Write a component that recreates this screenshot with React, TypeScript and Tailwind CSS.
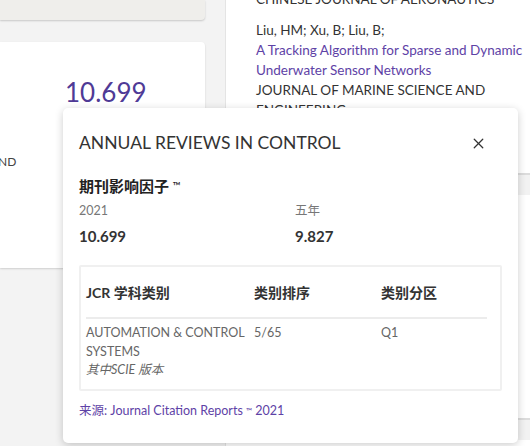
import { X } from "lucide-react";

const font = { fontFamily: '"Lato", "Noto Sans CJK SC", sans-serif' };

export default function App() {
    return (
        <div className="relative w-[530px] h-[446px] overflow-hidden bg-[#f3f3f3] text-[#333]" style={font}>
            <div className="flex h-full">
                {/* left column */}
                <div className="w-[205px] shrink-0 flex flex-col">
                    <div className="h-[20px] bg-[#efeeeb] rounded-br-[4px] shadow-[0_1px_2px_rgba(0,0,0,0.18)]"></div>
                    <div className="mt-[22px] h-[226px] bg-white rounded-tr-[4px] shadow-[0_1px_2px_rgba(0,0,0,0.15)] relative">
                        <div className="pl-[65px] pt-[34px] text-[26px] leading-[32px] text-[#4f3a96]">10.699</div>
                        <div className="mt-[46px] -ml-[2px] text-[12px] leading-[16px] text-[#444]">ND</div>
                    </div>
                </div>

                {/* right column */}
                <div className="ml-[20px] flex-1 bg-white border-l border-[#e4e4e4] flex flex-col">
                    <div className="pl-[30px] pt-0 text-[13.5px] leading-[20px] -mt-[11px]">
                        <div>CHINESE JOURNAL OF AERONAUTICS</div>
                        <div className="mt-[11px]">Liu, HM; Xu, B; Liu, B;</div>
                        <div className="text-[#5e42a6]">A Tracking Algorithm for Sparse and Dynamic</div>
                        <div className="text-[#5e42a6]">Underwater Sensor Networks</div>
                        <div>JOURNAL OF MARINE SCIENCE AND</div>
                        <div>ENGINEERING</div>
                    </div>
                    <div className="mt-[53px] h-[22px] border-t-2 border-[#dcdcdc] bg-[#f2f2f2]"></div>
                    <div className="mt-[223px] h-[22px] border-t-2 border-[#dcdcdc] bg-[#f2f2f2]"></div>
                </div>
            </div>

            {/* popup */}
            <div className="absolute left-[63px] top-[108px] w-[455px] h-[335px] bg-white rounded-[5px] shadow-[0_2px_8px_rgba(0,0,0,0.2)] px-[16px] pt-[22px]">
                <div className="flex items-center justify-between">
                    <h2 className="text-[17.5px] leading-[26px] text-[#333]">ANNUAL REVIEWS IN CONTROL</h2>
                    <button className="mr-[15px] text-[#333]">
                        <X size={17} strokeWidth={1.8} />
                    </button>
                </div>

                <div className="mt-[20px] text-[15px] leading-[20px] font-bold text-[#222]">
                    期刊影响因子 <span className="text-[11px] align-top font-normal">™</span>
                </div>
                <div className="grid grid-cols-[216px_1fr] mt-[7px]">
                    <div>
                        <div className="text-[12.5px] leading-[16px] text-[#777]">2021</div>
                        <div className="mt-[7px] text-[15px] leading-[20px] font-bold text-[#333]">10.699</div>
                    </div>
                    <div>
                        <div className="text-[12.5px] leading-[16px] text-[#777]">五年</div>
                        <div className="mt-[7px] text-[15px] leading-[20px] font-bold text-[#333]">9.827</div>
                    </div>
                </div>

                <div className="mt-[19px] w-[423px] border-2 border-[#f0f0f0] rounded-[2px] px-[5px] pt-[16px] pb-[9px]">
                    <div className="grid grid-cols-[168px_127px_1fr] text-[14px] leading-[20px] font-bold text-[#333] pb-[14px] border-b-2 border-[#ececec] mr-[8px]">
                        <div>JCR 学科类别</div>
                        <div>类别排序</div>
                        <div>类别分区</div>
                    </div>
                    <div className="grid grid-cols-[168px_127px_1fr] text-[12.5px] leading-[18.5px] text-[#666] pt-[5px]">
                        <div>
                            <div>AUTOMATION &amp; CONTROL SYSTEMS</div>
                            <div className="italic">其中SCIE 版本</div>
                        </div>
                        <div>5/65</div>
                        <div>Q1</div>
                    </div>
                </div>

                <div className="mt-[11px] text-[12.5px] leading-[18px] text-[#5e42a6]">
                    来源: Journal Citation Reports <span className="text-[8px] align-top">™</span> 2021
                </div>
            </div>
        </div>
    );
}
